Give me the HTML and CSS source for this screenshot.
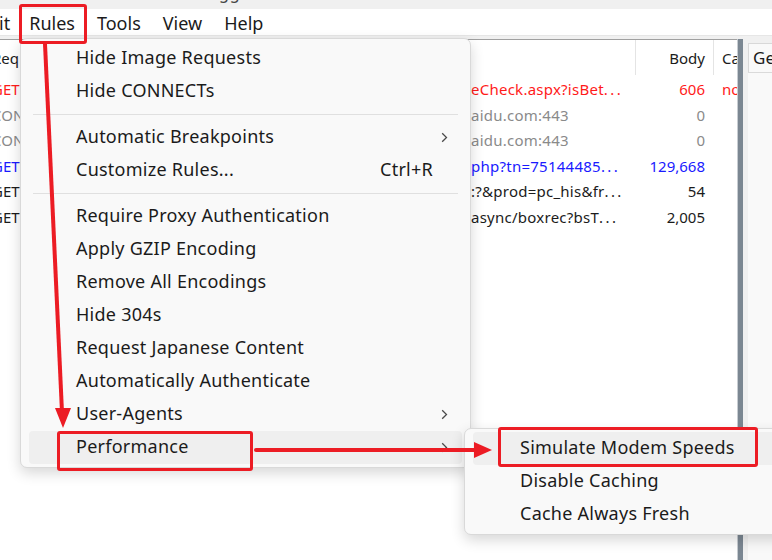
FILE: index.html
```html
<!DOCTYPE html>
<html>
<head>
<meta charset="utf-8">
<link rel="stylesheet" href="styles.css">
</head>
<body>
<div class="titlebar"><span class="title-frag">gg</span></div>
<div class="menubar">
  <span class="mb-item mb-first">Edit</span>
  <span class="mb-item">Rules</span>
  <span class="mb-item">Tools</span>
  <span class="mb-item">View</span>
  <span class="mb-item">Help</span>
</div>
<div class="workspace">
  <div class="sessions">
    <div class="row header">
      <span class="c-method">Req</span><span class="c-hidden"></span><span class="c-url"></span><span class="c-body">Body</span><span class="c-cache">Caching</span>
    </div>
    <div class="row red">
      <span class="c-method">GET</span><span class="c-hidden"></span><span class="c-url">eCheck.aspx?isBet<span class="ell">...</span></span><span class="c-body">606</span><span class="c-cache">no-cache</span>
    </div>
    <div class="row gray">
      <span class="c-method">CON</span><span class="c-hidden"></span><span class="c-url">aidu.com:443</span><span class="c-body">0</span><span class="c-cache"></span>
    </div>
    <div class="row gray">
      <span class="c-method">CON</span><span class="c-hidden"></span><span class="c-url">aidu.com:443</span><span class="c-body">0</span><span class="c-cache"></span>
    </div>
    <div class="row blue">
      <span class="c-method">GET</span><span class="c-hidden"></span><span class="c-url">php?tn=75144485<span class="ell">...</span></span><span class="c-body">129,668</span><span class="c-cache"></span>
    </div>
    <div class="row">
      <span class="c-method">GET</span><span class="c-hidden"></span><span class="c-url">:?&amp;prod=pc_his&amp;fr<span class="ell">...</span></span><span class="c-body">54</span><span class="c-cache"></span>
    </div>
    <div class="row">
      <span class="c-method">GET</span><span class="c-hidden"></span><span class="c-url">async/boxrec?bsT<span class="ell">...</span></span><span class="c-body">2,005</span><span class="c-cache"></span>
    </div>
  </div>
  <div class="splitter"></div>
  <div class="inspector">
    <div class="tab">Get Started</div>
    <div class="inspector-body"></div>
  </div>
</div>

<div class="menu dropdown">
  <div class="menu-item"><span class="label">Hide Image Requests</span></div>
  <div class="menu-item"><span class="label">Hide CONNECTs</span></div>
  <div class="sep"></div>
  <div class="menu-item"><span class="label">Automatic Breakpoints</span><svg class="chev" width="7" height="11" viewBox="0 0 7 11"><path d="M1.2 1.2L5.5 5.5L1.2 9.8" fill="none" stroke="#4a4a4a" stroke-width="1.3"/></svg></div>
  <div class="menu-item"><span class="label">Customize Rules...</span><span class="shortcut">Ctrl+R</span></div>
  <div class="sep"></div>
  <div class="menu-item"><span class="label">Require Proxy Authentication</span></div>
  <div class="menu-item"><span class="label">Apply GZIP Encoding</span></div>
  <div class="menu-item"><span class="label">Remove All Encodings</span></div>
  <div class="menu-item"><span class="label">Hide 304s</span></div>
  <div class="menu-item"><span class="label">Request Japanese Content</span></div>
  <div class="menu-item"><span class="label">Automatically Authenticate</span></div>
  <div class="menu-item"><span class="label">User-Agents</span><svg class="chev" width="7" height="11" viewBox="0 0 7 11"><path d="M1.2 1.2L5.5 5.5L1.2 9.8" fill="none" stroke="#4a4a4a" stroke-width="1.3"/></svg></div>
  <div class="menu-item active"><span class="label">Performance</span><svg class="chev" width="7" height="11" viewBox="0 0 7 11"><path d="M1.2 1.2L5.5 5.5L1.2 9.8" fill="none" stroke="#4a4a4a" stroke-width="1.3"/></svg></div>
</div>

<div class="menu submenu">
  <div class="menu-item active"><span class="label">Simulate Modem Speeds</span></div>
  <div class="menu-item"><span class="label">Disable Caching</span></div>
  <div class="menu-item"><span class="label">Cache Always Fresh</span></div>
</div>

<svg class="arrows" width="772" height="560" viewBox="0 0 772 560">
  <line x1="45" y1="44" x2="62" y2="412" stroke="#ec1c24" stroke-width="4"/>
  <polygon points="55,408 71,408 63,428" fill="#ec1c24"/>
  <line x1="256" y1="450" x2="476" y2="450" stroke="#ec1c24" stroke-width="4" stroke-linecap="round"/>
  <polygon points="474,442 474,458 492,450" fill="#ec1c24"/>
</svg>
<div class="mark mark-rules"></div>
<div class="mark mark-perf"></div>
<div class="mark mark-sim"></div>
</body>
</html>
```
FILE: styles.css
```css
html, body {
  margin: 0;
  padding: 0;
}
body {
  width: 772px;
  height: 560px;
  overflow: hidden;
  position: relative;
  font-family: "Noto Sans", sans-serif;
  color: #1b1b1b;
  background: #fff;
}
.titlebar {
  height: 9px;
  background: #f0f0f0;
  overflow: hidden;
}
.title-frag {
  display: block;
  padding-left: 219px;
  font-size: 16px;
  line-height: 16px;
  margin-top: -15px;
  color: #444;
  letter-spacing: 1px;
}
.menubar {
  display: flex;
  box-sizing: border-box;
  height: 27px;
  padding-top: 2px;
  line-height: 24px;
  font-size: 18px;
  background: #fff;
  border-bottom: 1px solid #e6e6e6;
  margin-left: -36px;
  white-space: nowrap;
}
.mb-item {
  padding: 0 11px;
}
.mb-first {
  padding: 0 8px 0 14px;
}
.workspace {
  display: flex;
  height: 524px;
  box-sizing: border-box;
  padding-top: 3px;
  background: #f0f0f0;
}
.sessions {
  width: 737px;
  flex: none;
  border-top: 1px solid #a0a0a0;
  background: #fff;
  overflow: hidden;
  font-size: 15px;
}
.row {
  display: grid;
  grid-template-columns: 28px 451px 165px 78px 23px;
  margin-left: -8px;
  height: 25.5px;
  line-height: 25.5px;
  white-space: nowrap;
}
.row > span {
  overflow: hidden;
}
.row > .c-method {
  overflow: visible;
}
.row.header {
  height: 37px;
  line-height: 36px;
  color: #1b1b1b;
}
.header .c-url,
.header .c-body {
  border-right: 1px solid #e4e4e4;
  box-sizing: border-box;
  margin-bottom: 2px;
}
.c-url {
  letter-spacing: 0.25px;
}
.ell {
  letter-spacing: 2.4px;
}
.c-body {
  text-align: right;
  padding-right: 9px;
}
.header .c-body {
  padding-right: 8px;
}
.c-cache {
  padding-left: 8px;
}
.red { color: #ff1a1a; }
.gray { color: #8a8a8a; }
.blue { color: #1a1aff; }
.splitter {
  width: 6px;
  flex: none;
  box-sizing: border-box;
  background: #7b8792;
  border-left: 1px solid #c8cdd2;
}
.inspector {
  flex: 1;
  overflow: hidden;
  padding: 4px 0 0 5px;
  display: flex;
  flex-direction: column;
}
.tab {
  height: 28px;
  line-height: 28px;
  font-size: 17px;
  padding: 0 6px 0 4px;
  border: 1px solid #d8d8d8;
  border-bottom: none;
  background: #f9f9f9;
  white-space: nowrap;
  align-self: flex-start;
}
.inspector-body {
  flex: 1;
  background: #f9f9f9;
  border-top: 1px solid #dadada;
}
.menu {
  position: absolute;
  box-sizing: border-box;
  background: #f9f9f9;
  border: 1px solid #d9d9d9;
  border-radius: 7px;
  box-shadow: 0 5px 14px rgba(0, 0, 0, 0.16);
  padding: 3px 0;
  font-size: 18px;
  letter-spacing: 0.25px;
  white-space: nowrap;
}
.dropdown {
  left: 20px;
  top: 38px;
  width: 451px;
}
.submenu {
  left: 464px;
  top: 428px;
  width: 340px;
}
.menu-item {
  display: flex;
  align-items: center;
  box-sizing: border-box;
  height: 33px;
  margin: 0 8px;
  padding: 0 14px 3px 47px;
  border-radius: 4px;
}
.menu-item .label {
  flex: 1;
}
.menu-item .chev {
  margin-top: 3px;
}
.menu-item.active {
  background: #efefef;
}
.shortcut {
  margin-right: 15px;
}
.sep {
  height: 1px;
  background: #e0e0e0;
  margin: 6px 12px;
}
.arrows {
  position: absolute;
  left: 0;
  top: 0;
  pointer-events: none;
}
.mark {
  position: absolute;
  box-sizing: border-box;
  border: 3px solid #ec1c24;
  border-radius: 3px;
}
.mark-rules {
  left: 19px;
  top: 4px;
  width: 68px;
  height: 40px;
}
.mark-perf {
  left: 57px;
  top: 431px;
  width: 196px;
  height: 40px;
}
.mark-sim {
  left: 498px;
  top: 427px;
  width: 260px;
  height: 40px;
}
```
